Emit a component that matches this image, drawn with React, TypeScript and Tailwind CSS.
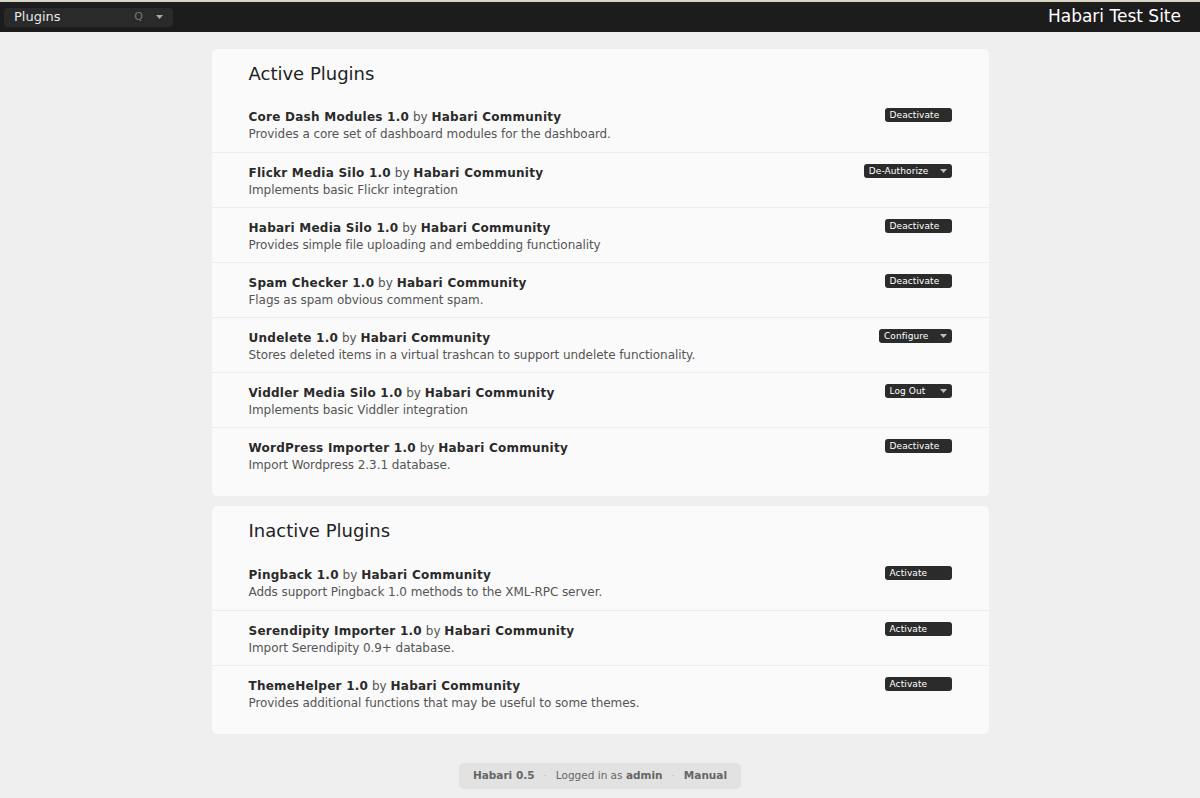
import { ReactNode } from 'react';

type Plugin = {
  name: string;
  description: string;
  action: string;
  menu?: boolean;
};

const activePlugins: Plugin[] = [
  { name: 'Core Dash Modules 1.0', description: 'Provides a core set of dashboard modules for the dashboard.', action: 'Deactivate' },
  { name: 'Flickr Media Silo 1.0', description: 'Implements basic Flickr integration', action: 'De-Authorize', menu: true },
  { name: 'Habari Media Silo 1.0', description: 'Provides simple file uploading and embedding functionality', action: 'Deactivate' },
  { name: 'Spam Checker 1.0', description: 'Flags as spam obvious comment spam.', action: 'Deactivate' },
  { name: 'Undelete 1.0', description: 'Stores deleted items in a virtual trashcan to support undelete functionality.', action: 'Configure', menu: true },
  { name: 'Viddler Media Silo 1.0', description: 'Implements basic Viddler integration', action: 'Log Out', menu: true },
  { name: 'WordPress Importer 1.0', description: 'Import Wordpress 2.3.1 database.', action: 'Deactivate' },
];

const inactivePlugins: Plugin[] = [
  { name: 'Pingback 1.0', description: 'Adds support Pingback 1.0 methods to the XML-RPC server.', action: 'Activate' },
  { name: 'Serendipity Importer 1.0', description: 'Import Serendipity 0.9+ database.', action: 'Activate' },
  { name: 'ThemeHelper 1.0', description: 'Provides additional functions that may be useful to some themes.', action: 'Activate' },
];

function Caret() {
  return (
    <svg width="7" height="4" viewBox="0 0 7 4" className="ml-auto">
      <path d="M0 0 L7 0 L3.5 4 Z" fill="#bdbdbd" />
    </svg>
  );
}

function ActionButton({ plugin }: { plugin: Plugin }) {
  return (
    <button className="flex h-[14px] min-w-[67px] items-center gap-[11px] rounded-[3px] bg-[#2b2b2b] pl-[5px] pr-[5px] text-[9px] leading-none tracking-[0.1px] text-white">
      <span>{plugin.action}</span>
      {plugin.menu && <Caret />}
    </button>
  );
}

function PluginRow({ plugin, first }: { plugin: Plugin; first: boolean }) {
  return (
    <div className={`flex h-[55px] items-start px-[37px] pt-[10px] ${first ? '' : 'border-t border-[#ececec]'}`}>
      <div className="flex-1">
        <div className="pt-[1px] text-[12px] leading-[18px] text-[#2a2a2a]">
          <span className="font-bold tracking-[0.25px]">{plugin.name}</span>
          <span className="text-[#555]"> by </span>
          <span className="font-bold tracking-[0.25px]">Habari Community</span>
        </div>
        <div className="-mt-[1px] text-[12px] leading-[18px] tracking-[-0.07px] text-[#555]">{plugin.description}</div>
      </div>
      <div className="pt-[1px]">
        <ActionButton plugin={plugin} />
      </div>
    </div>
  );
}

function Card({ title, children, headerHeight }: { title: string; children: ReactNode; headerHeight: string }) {
  return (
    <section className="rounded-[5px] bg-[#fafafa] pb-[14px]">
      <h2 className={`flex items-center px-[37px] text-[18px] text-[#222] ${headerHeight}`}>{title}</h2>
      {children}
    </section>
  );
}

export default function App() {
  return (
    <div
      className="min-h-[798px] bg-[#efefef]"
      style={{ fontFamily: '"DejaVu Sans", Verdana, sans-serif' }}
    >
      <header className="flex h-[32px] items-center border-t-2 border-[#d9d3c4] bg-[#1c1c1c] pl-[4px] pr-[19px]">
        <div className="flex h-[19px] w-[169px] items-center rounded-[4px] bg-[#2a2a2a] pl-[10px] pr-[10px]">
          <span className="text-[13px] text-[#e8e8e8]">Plugins</span>
          <span className="ml-auto mr-[13px] text-[11px] text-[#777]">Q</span>
          <svg width="7" height="4" viewBox="0 0 7 4">
            <path d="M0 0 L7 0 L3.5 4 Z" fill="#aaa" />
          </svg>
        </div>
        <div className="ml-auto text-[17px] text-white">Habari Test Site</div>
      </header>

      <main className="mx-auto flex w-[777px] flex-col gap-[10px] pt-[17px]">
        <Card title="Active Plugins" headerHeight="h-[48px]">
          {activePlugins.map((p, i) => (
            <PluginRow key={p.name} plugin={p} first={i === 0} />
          ))}
        </Card>
        <Card title="Inactive Plugins" headerHeight="h-[49px]">
          {inactivePlugins.map((p, i) => (
            <PluginRow key={p.name} plugin={p} first={i === 0} />
          ))}
        </Card>
      </main>

      <footer className="flex justify-center pt-[29px]">
        <div className="flex h-[26px] items-center gap-[9px] rounded-[5px] bg-[#e2e2e2] px-[14px] text-[10.5px] text-[#666]">
          <span className="font-bold">Habari 0.5</span>
          <span className="text-[#bbb]">·</span>
          <span>
            Logged in as <span className="font-bold">admin</span>
          </span>
          <span className="text-[#bbb]">·</span>
          <span className="font-bold">Manual</span>
        </div>
      </footer>
    </div>
  );
}
